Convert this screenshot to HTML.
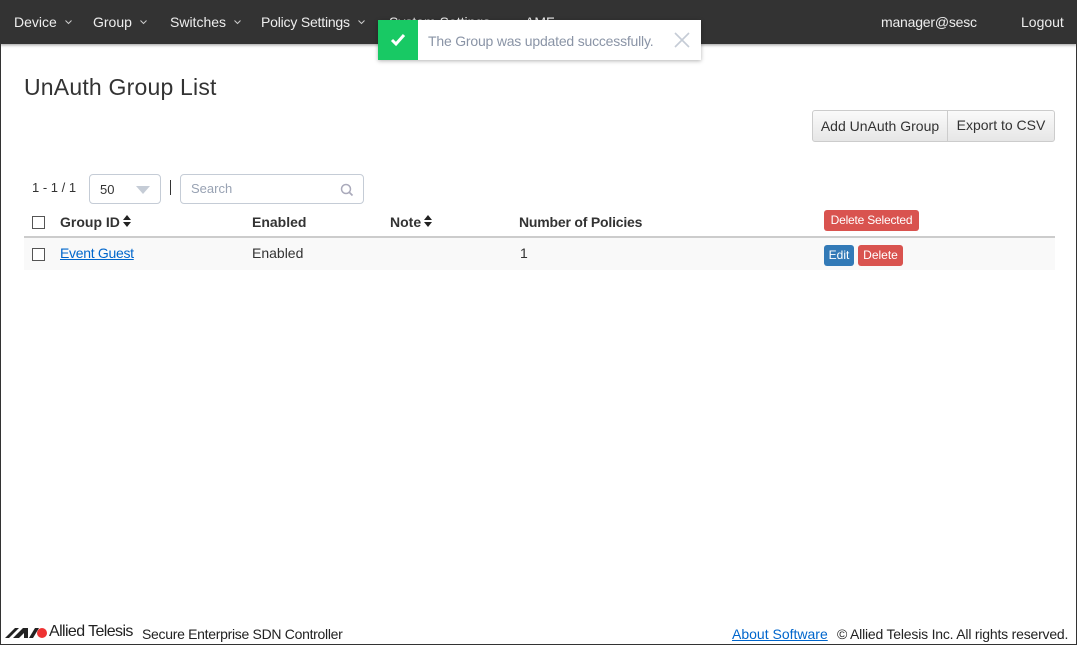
<!DOCTYPE html>
<html><head><meta charset="utf-8"><style>
*{box-sizing:border-box;margin:0;padding:0}
body{width:1077px;height:645px;overflow:hidden;background:#fff;font-family:"Liberation Sans",sans-serif;color:#333;position:relative}
.frame{position:absolute;left:0;top:0;width:1077px;height:645px;border:1px solid #333;border-top:none}
.nav{position:absolute;left:0;top:0;width:1077px;height:44px;background:#333;box-shadow:0 1px 3px rgba(0,0,0,.4)}
.nav span{position:absolute;top:14px;color:#eee;font-size:14px;white-space:nowrap}
.car{display:inline-block;margin-left:8px;vertical-align:2px}
.toast{position:absolute;left:378px;top:20px;width:323px;height:40px;background:#fff;box-shadow:0 1px 4px rgba(0,0,0,.3)}
.toast .g{position:absolute;left:0;top:0;width:40px;height:40px;background:#18c964}
.abs{position:absolute;white-space:nowrap}
h1{position:absolute;left:24px;top:74px;font-size:23px;font-weight:normal;color:#333}
.btn{position:absolute;top:110px;height:32px;background:linear-gradient(#fafafa,#e6e6e6);border:1px solid #ccc;font-size:14px;color:#333;line-height:30px;text-align:center}
.cb{position:absolute;width:13px;height:13px;border:1px solid #555;background:#fff}
.b{font-weight:bold;font-size:14px}
.sm{position:absolute;height:21px;color:#fff;font-size:12px;border-radius:3px;line-height:20px;text-align:center}
</style></head><body>
<div class="nav">
<span style="left:14px">Device<svg class="car" width="7" height="5"><path d="M.5.5L3.5 3.5 6.5.5" stroke="#ccc" fill="none"/></svg></span>
<span style="left:93px">Group<svg class="car" width="7" height="5"><path d="M.5.5L3.5 3.5 6.5.5" stroke="#ccc" fill="none"/></svg></span>
<span style="left:170px">Switches<svg class="car" width="7" height="5"><path d="M.5.5L3.5 3.5 6.5.5" stroke="#ccc" fill="none"/></svg></span>
<span style="left:261px;letter-spacing:-0.2px">Policy Settings<svg class="car" width="7" height="5"><path d="M.5.5L3.5 3.5 6.5.5" stroke="#ccc" fill="none"/></svg></span>
<span style="left:389px">System Settings</span>
<span style="left:525px">AMF</span>
<span style="left:881px;letter-spacing:-0.2px">manager@sesc</span>
<span style="left:1021px">Logout</span>
</div>
<div class="toast"><div class="g"><svg width="40" height="40"><path d="M14 20l4 4 8-9" stroke="#fff" stroke-width="3" fill="none"/></svg></div>
<div class="abs" style="left:50px;top:13px;font-size:14px;color:#8a94a6;letter-spacing:-0.2px">The Group was updated successfully.</div>
<svg class="abs" style="left:296px;top:12px" width="16" height="16"><path d="M1 1l14 14M15 1L1 15" stroke="#c5ccd6" stroke-width="1.6"/></svg></div>
<h1 style="letter-spacing:0.2px">UnAuth Group List</h1>
<div class="btn" style="left:812px;width:136px;border-radius:3px 0 0 3px">Add UnAuth Group</div>
<div class="btn" style="left:947px;width:108px;border-radius:0 3px 3px 0;line-height:28px">Export to CSV</div>
<div class="abs" style="left:32px;top:180px;font-size:13px">1 - 1 / 1</div>
<div class="abs" style="left:89px;top:174px;width:72px;height:30px;border:1px solid #c5ccd6;border-radius:4px;font-size:13px;padding:7px 0 0 10px;color:#333">50<svg class="abs" style="left:46px;top:11px" width="14" height="8"><path d="M0 0h14L7 8z" fill="#c5ccd6"/></svg></div>
<div class="abs" style="left:170px;top:180px;width:1px;height:15px;background:#333"></div>
<div class="abs" style="left:180px;top:174px;width:184px;height:30px;border:1px solid #c5ccd6;border-radius:4px;font-size:13px;padding:6px 0 0 10px;color:#98a2b3">Search<svg class="abs" style="left:159px;top:8px" width="14" height="14"><circle cx="6" cy="6" r="4.5" stroke="#aab" stroke-width="1.5" fill="none"/><path d="M9.5 9.5l3 3" stroke="#aab" stroke-width="1.7"/></svg></div>
<div class="cb" style="left:32px;top:216px"></div>
<div class="abs b" style="left:60px;top:214px">Group ID<svg style="margin-left:3px" width="8" height="12"><path d="M0 5L4 0 8 5zM0 7h8L4 12z" fill="#222"/></svg></div>
<div class="abs b" style="left:252px;top:214px">Enabled</div>
<div class="abs b" style="left:390px;top:214px">Note<svg style="margin-left:3px" width="8" height="12"><path d="M0 5L4 0 8 5zM0 7h8L4 12z" fill="#222"/></svg></div>
<div class="abs b" style="left:519px;top:214px;letter-spacing:-0.2px">Number of Policies</div>
<div class="sm" style="left:824px;top:210px;width:95px;background:#d9534f;letter-spacing:-0.2px">Delete Selected</div>
<div class="abs" style="left:24px;top:236px;width:1031px;height:2px;background:#ccc"></div>
<div class="abs" style="left:24px;top:238px;width:1031px;height:32px;background:#f9f9f9"></div>
<div class="cb" style="left:32px;top:248px"></div>
<div class="abs" style="left:60px;top:245px;font-size:14px;color:#0066cc;text-decoration:underline;letter-spacing:-0.3px">Event Guest</div>
<div class="abs" style="left:252px;top:245px;font-size:14px">Enabled</div>
<div class="abs" style="left:520px;top:245px;font-size:14px">1</div>
<div class="sm" style="left:824px;top:245px;width:30px;background:#337ab7">Edit</div>
<div class="sm" style="left:858px;top:245px;width:45px;background:#d9534f">Delete</div>
<svg class="abs" style="left:5px;top:625px" width="42" height="14"><path d="M0 13L10 3h4L4 13zM8 13L18 3h5v10h-4v-5l-5 5z" fill="#222"/><path d="M24 13l6-10h4l-6 10z" fill="#222"/><circle cx="37" cy="8" r="5" fill="#e33"/></svg>
<div class="abs" style="left:49px;top:623px;font-size:16px;color:#222;letter-spacing:-0.6px">Allied Telesis</div>
<div class="abs" style="left:142px;top:626px;font-size:14px;color:#222;letter-spacing:-0.3px">Secure Enterprise SDN Controller</div>
<div class="abs" style="left:732px;top:626px;font-size:14px;color:#0066cc;text-decoration:underline">About Software</div>
<div class="abs" style="left:837px;top:626px;font-size:14px;color:#222;letter-spacing:-0.2px">© Allied Telesis Inc. All rights reserved.</div>
<div class="frame"></div>
</body></html>
